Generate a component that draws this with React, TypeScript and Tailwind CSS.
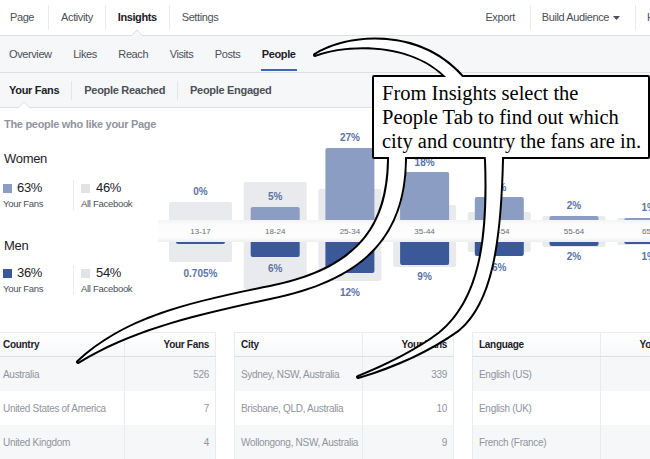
import React from "react";

const bars = [
  { age: "13-17", gTop: 202, gBot: 262, wTop: 220, mBot: 244, wLab: "0%", wY: 191, mLab: "0.705%", mY: 273 },
  { age: "18-24", gTop: 182, gBot: 289, wTop: 207, mBot: 257, wLab: "5%", wY: 196, mLab: "6%", mY: 268 },
  { age: "25-34", gTop: 189, gBot: 281, wTop: 148, mBot: 273, wLab: "27%", wY: 137, mLab: "12%", mY: 292 },
  { age: "35-44", gTop: 205, gBot: 267, wTop: 172, mBot: 265, wLab: "18%", wY: 162, mLab: "9%", mY: 276 },
  { age: "45-54", gTop: 212, gBot: 252, wTop: 197, mBot: 256, wLab: "9%", wY: 187, mLab: "6%", mY: 267 },
  { age: "55-64", gTop: 216, gBot: 247, wTop: 216, mBot: 246, wLab: "2%", wY: 205, mLab: "2%", mY: 256 },
  { age: "65+", gTop: 218, gBot: 245, wTop: 218, mBot: 244, wLab: "1%", wY: 207, mLab: "1%", mY: 256 },
];

const tables = [
  {
    head: "Country",
    rows: [
      ["Australia", "526"],
      ["United States of America", "7"],
      ["United Kingdom", "4"],
    ],
  },
  {
    head: "City",
    rows: [
      ["Sydney, NSW, Australia", "339"],
      ["Brisbane, QLD, Australia", "10"],
      ["Wollongong, NSW, Australia", "9"],
    ],
  },
  {
    head: "Language",
    rows: [
      ["English (US)", ""],
      ["English (UK)", ""],
      ["French (France)", ""],
    ],
  },
];

// callout shape (box + three tails), drawn twice: black outline then white fill
const shapes = [
  "M315,55 C345,35 420,26 465,80 L465,90 L449,90 L449,80 C415,42 350,42 315,55 Z",
  "M389,150 L389,160 C388,220 365,268 270,287 C190,303 125,318 78,362 C130,330 190,315 270,298 C370,278 404,230 405,160 L405,150 Z",
  "M485,150 L486,160 C489,240 480,300 440,333 C415,352 385,366 358,377 C395,366 430,350 458,330 C492,302 500,240 502,160 L502,150 Z",
];

const Sep = () => <span className="h-[25px] w-px bg-[#e9ebee]" />;

function StatRow({ fans, all, color }: { fans: string; all: string; color: string }) {
  return (
    <div className="flex text-[#1d2129]">
      <div className="w-[73px] pl-[3px]">
        <div className="flex items-center gap-[5px] text-[13px] leading-[16px] tracking-[-0.3px]">
          <span className={`h-[9px] w-[9px] ${color}`} />
          {fans}
        </div>
        <div className="mt-[2px] text-[9.5px] leading-[12px] tracking-[-0.3px] text-[#4b4f56]">Your Fans</div>
      </div>
      <div className="border-l border-[#e9ebee] pl-[7px]">
        <div className="flex items-center gap-[6px] text-[13px] leading-[16px] tracking-[-0.3px]">
          <span className="h-[9px] w-[9px] bg-[#e2e3e6]" />
          {all}
        </div>
        <div className="mt-[2px] text-[9.5px] leading-[12px] tracking-[-0.3px] text-[#4b4f56]">All Facebook</div>
      </div>
    </div>
  );
}

function Chart() {
  const cx = (i: number) => 200.5 + i * 74.7;
  return (
    <svg width={493} height={180} viewBox="157 131 493 180" className="block shrink-0">
      <defs>
        <linearGradient id="band" x1="0" y1="0" x2="0" y2="1">
          <stop offset="0" stopColor="#f3f4f5" />
          <stop offset="0.25" stopColor="#fdfdfd" />
          <stop offset="0.8" stopColor="#fcfcfc" />
          <stop offset="1" stopColor="#eceef0" />
        </linearGradient>
      </defs>
      {bars.map((b, i) => (
        <g key={b.age}>
          <rect x={cx(i) - 31.5} y={b.gTop} width={63} height={b.gBot - b.gTop} rx={2} fill="#e9eaed" />
          {b.wTop < 220 && <rect x={cx(i) - 24.5} y={b.wTop} width={49} height={224 - b.wTop} rx={2} fill="#8b9dc3" />}
          <rect x={cx(i) - 24.5} y={238} width={49} height={b.mBot - 238} rx={2} fill="#3b5998" />
          <text x={cx(i)} y={b.wY} textAnchor="middle" dominantBaseline="central" fontSize={10} fontWeight={700} fill="#5b73a6" fontFamily="Liberation Sans, Arial, sans-serif">
            {b.wLab}
          </text>
          <text x={cx(i)} y={b.mY} textAnchor="middle" dominantBaseline="central" fontSize={10} fontWeight={700} fill="#5b73a6" fontFamily="Liberation Sans, Arial, sans-serif">
            {b.mLab}
          </text>
        </g>
      ))}
      <rect x={158} y={220} width={500} height={22} fill="url(#band)" />
      {bars.map((b, i) => (
        <text key={b.age} x={cx(i)} y={231.5} textAnchor="middle" dominantBaseline="central" fontSize={8} fill="#6a6f76" fontFamily="Liberation Sans, Arial, sans-serif">
          {b.age}
        </text>
      ))}
    </svg>
  );
}

export default function App() {
  return (
    <div className="relative h-[459px] w-[650px] overflow-hidden bg-white font-['Liberation_Sans',Arial,Helvetica,sans-serif]">
      {/* top nav */}
      <div className="flex h-[36px] items-center border-b border-[#dddfe2] bg-white text-[11px] tracking-[-0.4px] text-[#4b4f56]">
        <span className="pl-[10px] pr-[14px]">Page</span>
        <Sep />
        <span className="px-[12px]">Activity</span>
        <Sep />
        <span className="relative flex h-full items-center px-[12px] font-bold text-[#1d2129]">
          Insights
          <svg width="12" height="7" viewBox="0 0 12 7" className="absolute bottom-[-1px] left-1/2 -translate-x-1/2">
            <path d="M0 7 L6 1 L12 7" fill="#f6f7f9" stroke="#dddfe2" />
          </svg>
        </span>
        <Sep />
        <span className="px-[12px]">Settings</span>
        <div className="ml-auto flex h-full items-center">
          <span className="pr-[15px]">Export</span>
          <Sep />
          <span className="flex items-center gap-[4px] pl-[11px] pr-[15px]">
            Build Audience
            <svg width="7" height="4" viewBox="0 0 7 4">
              <path d="M0 0 L7 0 L3.5 4 Z" fill="#4b4f56" />
            </svg>
          </span>
          <Sep />
          <span className="w-[14px] overflow-hidden whitespace-nowrap pl-[11px]">Help</span>
        </div>
      </div>

      {/* insights tabs */}
      <div className="flex h-[37px] items-center gap-[21.5px] border-b border-[#dddfe2] bg-[#f6f7f9] pl-[9px] text-[11px] tracking-[-0.4px] text-[#4b4f56]">
        <span>Overview</span>
        <span>Likes</span>
        <span>Reach</span>
        <span>Visits</span>
        <span>Posts</span>
        <span className="relative flex h-full items-center font-bold text-[#1d2129]">
          People
          <span className="absolute bottom-[1px] left-[-1px] right-[-1px] h-[2px] bg-[#4267b2]" />
        </span>
      </div>

      {/* people sub tabs */}
      <div className="flex h-[35px] items-center border-b border-[#dddfe2] bg-[#f6f7f9] text-[11px] font-bold tracking-[-0.3px] text-[#4b4f56]">
        <span className="relative flex h-full items-center pl-[9px] pr-[12px] text-[#1d2129]">
          Your Fans
          <svg width="12" height="7" viewBox="0 0 12 7" className="absolute bottom-[-1px] left-[18px]">
            <path d="M0 7 L6 1 L12 7" fill="#ffffff" stroke="#dddfe2" />
          </svg>
        </span>
        <span className="h-[19px] w-px bg-[#e3e5e8]" />
        <span className="px-[12px]">People Reached</span>
        <span className="h-[19px] w-px bg-[#e3e5e8]" />
        <span className="px-[12px]">People Engaged</span>
      </div>

      <div className="pl-[4px] pt-[9px] text-[11px] font-bold leading-[14px] tracking-[-0.3px] text-[#90949c]">
        The people who like your Page
      </div>

      <div className="flex">
        <div className="w-[157px] shrink-0">
          <div className="mt-[20px] pl-[4px] text-[13px] leading-[16px] tracking-[-0.3px] text-[#1d2129]">Women</div>
          <div className="mt-[13px]">
            <StatRow fans="63%" all="46%" color="bg-[#8b9dc3]" />
          </div>
          <div className="mt-[28px] pl-[4px] text-[13px] leading-[16px] tracking-[-0.3px] text-[#1d2129]">Men</div>
          <div className="mt-[11px]">
            <StatRow fans="36%" all="54%" color="bg-[#3b5998]" />
          </div>
        </div>
        <Chart />
      </div>

      {/* tables */}
      <div className="ml-[-4px] mt-[21px] flex gap-[18px]">
        {tables.map((t) => (
          <div key={t.head} className="w-[220px] shrink-0 border-x border-t border-[#e9ebee] text-[10px] tracking-[-0.3px]">
            <div className="flex h-[24px] items-center border-b border-[#dddfe2] bg-gradient-to-b from-white to-[#f7f8fa] font-bold text-[#1d2129]">
              <div className="flex h-full w-[128px] items-center border-r border-[#e9ebee] pl-[6px]">{t.head}</div>
              <div className="flex-1 pr-[6px] text-right">Your Fans</div>
            </div>
            {t.rows.map((r, i) => (
              <div key={r[0]} className={`flex h-[34px] items-center text-[#90949c] ${i % 2 === 0 ? "bg-[#f6f7f9]" : "bg-white"}`}>
                <div className="flex h-full w-[128px] items-center border-r border-[#e9ebee] pl-[6px]">{r[0]}</div>
                <div className="flex-1 pr-[6px] text-right">{r[1]}</div>
              </div>
            ))}
          </div>
        ))}
      </div>

      {/* callout overlay */}
      <svg width={650} height={459} viewBox="0 0 650 459" className="pointer-events-none absolute left-0 top-0">
        <g fill="none" stroke="#000" strokeWidth={4} strokeLinejoin="round">
          <rect x={374} y={77} width={274} height={80} />
          {shapes.map((d) => (
            <path key={d} d={d} />
          ))}
        </g>
        <g fill="#fff">
          <rect x={374} y={77} width={274} height={80} />
          {shapes.map((d) => (
            <path key={d} d={d} />
          ))}
        </g>
      </svg>
      <div className="absolute left-[382px] top-[81px] whitespace-nowrap font-['Liberation_Serif','Times_New_Roman',serif] text-[20.5px] leading-[24px] text-black">
        From Insights select the
        <br />
        People Tab to find out which
        <br />
        city and country the fans are in.
      </div>
    </div>
  );
}
